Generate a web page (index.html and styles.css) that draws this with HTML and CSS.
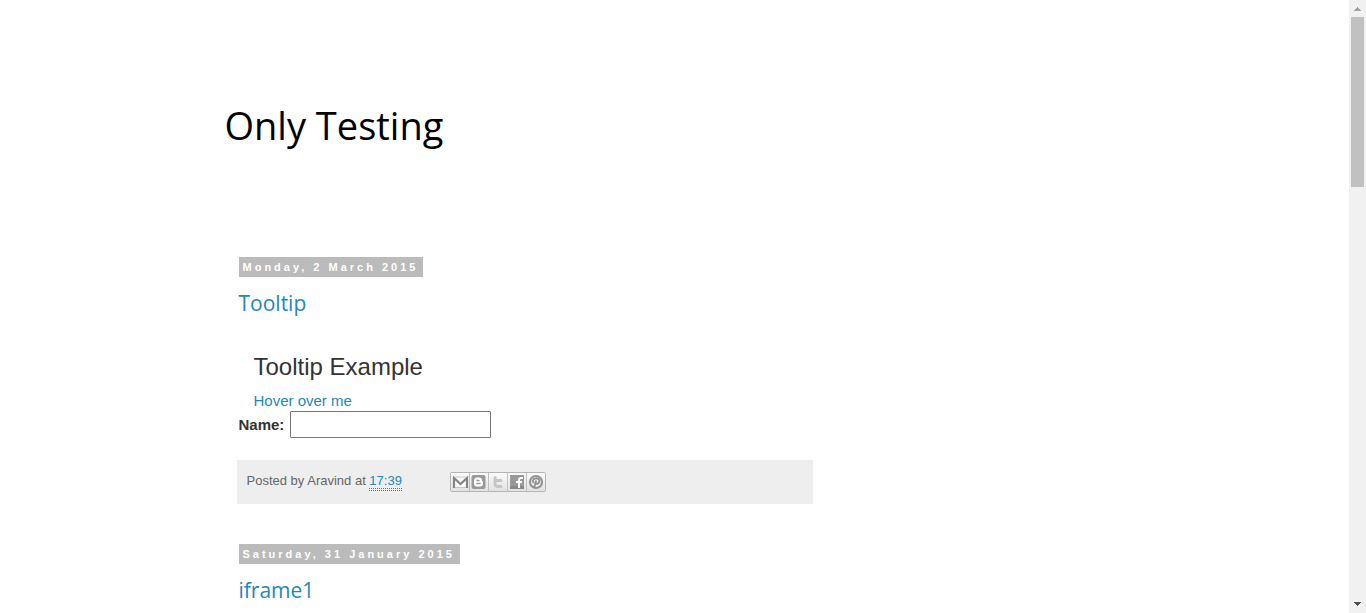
FILE: index.html
```html
<!DOCTYPE html>
<html lang="en">
<head>
<meta charset="utf-8">
<title>Only Testing</title>
<link rel="stylesheet" href="styles.css">
</head>
<body>
<div class="viewport">
  <div class="page">
    <div class="content">
      <header class="site-header"><h1 class="site-title">Only Testing</h1></header>
      <main class="posts">
        <section class="day">
          <h2 class="date"><span class="date-label">Monday, 2 March 2015</span></h2>
          <article class="post">
            <h3 class="post-title"><a href="#tooltip">Tooltip</a></h3>
            <div class="post-body">
              <div class="example">
                <h3 class="example-title">Tooltip Example</h3>
                <a href="#hover">Hover over me</a>
              </div>
              <div class="field">
                <label for="name">Name:</label>
                <input id="name" class="name-input" type="text">
              </div>
            </div>
            <footer class="post-footer">
              <span>Posted by Aravind at <a class="time-link" href="#time"><abbr class="time">17:39</abbr></a></span>
              <div class="share">
                <a class="share-button" href="#email" aria-label="Email this"><svg viewBox="0 0 18 18"><path d="M2 4h15v11H2z" fill="#fafafa"/><path d="M3 15V5l6.500 6L16 5v10" fill="none" stroke="#858585" stroke-width="2.200"/><path d="M4 4h11M4 14.500h11" stroke="#c8c8c8"/></svg></a>
                <a class="share-button" href="#blog" aria-label="BlogThis!"><svg viewBox="0 0 18 18"><rect x="1.500" y="2" width="14" height="14" rx="2" fill="#999"/><path d="M6.500 4.500h2.500q3 0 3 3 0 .5 .5.500 .5 0 .5.700V10.500q0 3-3 3H7q-3 0-3-3V7.500q0-3 3-3z" fill="#fff"/><path d="M7 7.500h2M7 10.500h3" stroke="#999" stroke-width="1.500" stroke-linecap="round"/></svg></a>
                <a class="share-button" href="#twitter" aria-label="Share to Twitter"><svg viewBox="0 0 18 18"><path d="M6 4.500v6q0 3 3 3h3M6 7.500h6" fill="none" stroke="#c6c6c6" stroke-width="3" stroke-linecap="round"/></svg></a>
                <a class="share-button" href="#facebook" aria-label="Share to Facebook"><svg viewBox="0 0 18 18"><path d="M2 2h14v14H2z" fill="#999"/><path d="M2 13h14v3H2z" fill="#888"/><path d="M11 15V7q0-2 2-2h2M8 9h6" fill="none" stroke="#fff" stroke-width="2"/></svg></a>
                <a class="share-button" href="#pinterest" aria-label="Share to Pinterest"><svg viewBox="0 0 18 18"><circle cx="9" cy="9" r="6" fill="#f4f4f4" stroke="#949494" stroke-width="2.200"/><path d="M6.500 10.200C4.900 7 7 5.200 9.200 5.200c2.400 0 3.600 1.600 3 3.600-.7 2.300-2.900 2.500-3.500 1.300M9.200 7.500 7 15" fill="none" stroke="#8f8f8f" stroke-width="1.900"/></svg></a>
              </div>
            </footer>
          </article>
        </section>
        <section class="day">
          <h2 class="date"><span class="date-label">Saturday, 31 January 2015</span></h2>
          <article class="post"><h3 class="post-title"><a href="#iframe1">iframe1</a></h3></article>
        </section>
      </main>
    </div>
  </div>
  <div class="scrollbar" aria-hidden="true">
    <svg class="arrow" viewBox="0 0 17 17"><path d="M5 11h7L8.500 7z" fill="#a3a3a3"/></svg>
    <div class="track"><div class="thumb"></div></div>
    <svg class="arrow" viewBox="0 0 17 17"><path d="M5 6h7L8.500 10z" fill="#505050"/></svg>
  </div>
</div>
</body>
</html>
```
FILE: styles.css
```css
* { box-sizing: border-box; }
body {
  margin: 0;
  background: #fff;
  color: #333;
  font: 15px/20px "Liberation Sans", Arial, sans-serif;
}
h1, h2, h3 { margin: 0; font-weight: 400; }
a { color: #2288bb; text-decoration: none; }
.viewport { display: flex; height: 100vh; overflow: hidden; }
.page { flex: 1; min-width: 0; }
.content { max-width: 960px; margin: 0 auto; padding: 0 30px; }
.site-header { padding: 95px 0 102px; }
.site-title {
  color: #000;
  font: 38px/60px "Trebuchet MS", "Open Sans", sans-serif;
}
.posts { max-width: 588px; padding: 0 0 0 12px; }
.day { margin-bottom: 40px; }
.date { display: flex; padding-left: 2px; }
.date-label {
  padding: 0 5px 0 4px;
  background: #bbb;
  color: #fff;
  font-size: 11px;
  font-weight: 700;
  line-height: 20px;
  letter-spacing: 3px;
}
.post-title {
  padding: 11px 0 0 2px;
  font: 21px/30px "Trebuchet MS", "Open Sans", sans-serif;
}
.post-body { padding: 29px 0 22px 2px; }
.example { padding-left: 15px; }
.example-title { margin-bottom: 4px; font-size: 24px; line-height: 40px; }
.field { display: flex; align-items: center; gap: 6px; }
.field label { font-weight: 700; }
.name-input {
  width: 201px;
  height: 27px;
  padding: 2px 4px;
  border: 1px solid #767676;
  border-radius: 1px;
  background: #fff;
  font: inherit;
}
.post-footer {
  display: flex;
  align-items: center;
  gap: 48px;
  min-height: 44px;
  padding: 0 10px 2px;
  background: #eee;
  color: #666;
  font-size: 13px;
}
.time-link { border-bottom: 1px dotted #2288bb; }
.time { padding-bottom: 2px; border-bottom: 1px dotted #666; text-decoration: none; }
.share { display: flex; margin-top: 2px; border: 1px solid #b5b5b5; border-radius: 2px; }
.share-button {
  display: block;
  width: 19px;
  height: 18px;
  border-left: 1px solid #c0c0c0;
  background: linear-gradient(#fbfbfb, #e2e2e2);
}
.share-button:first-child { width: 18px; border-left: 0; }
.share-button svg { display: block; width: 18px; height: 18px; }
.scrollbar { display: flex; flex-direction: column; width: 17px; background: #f1f1f1; }
.arrow { display: block; width: 17px; height: 17px; shape-rendering: crispEdges; }
.track { flex: 1; padding: 0 2px; }
.thumb { height: 170px; background: #c1c1c1; }
```
